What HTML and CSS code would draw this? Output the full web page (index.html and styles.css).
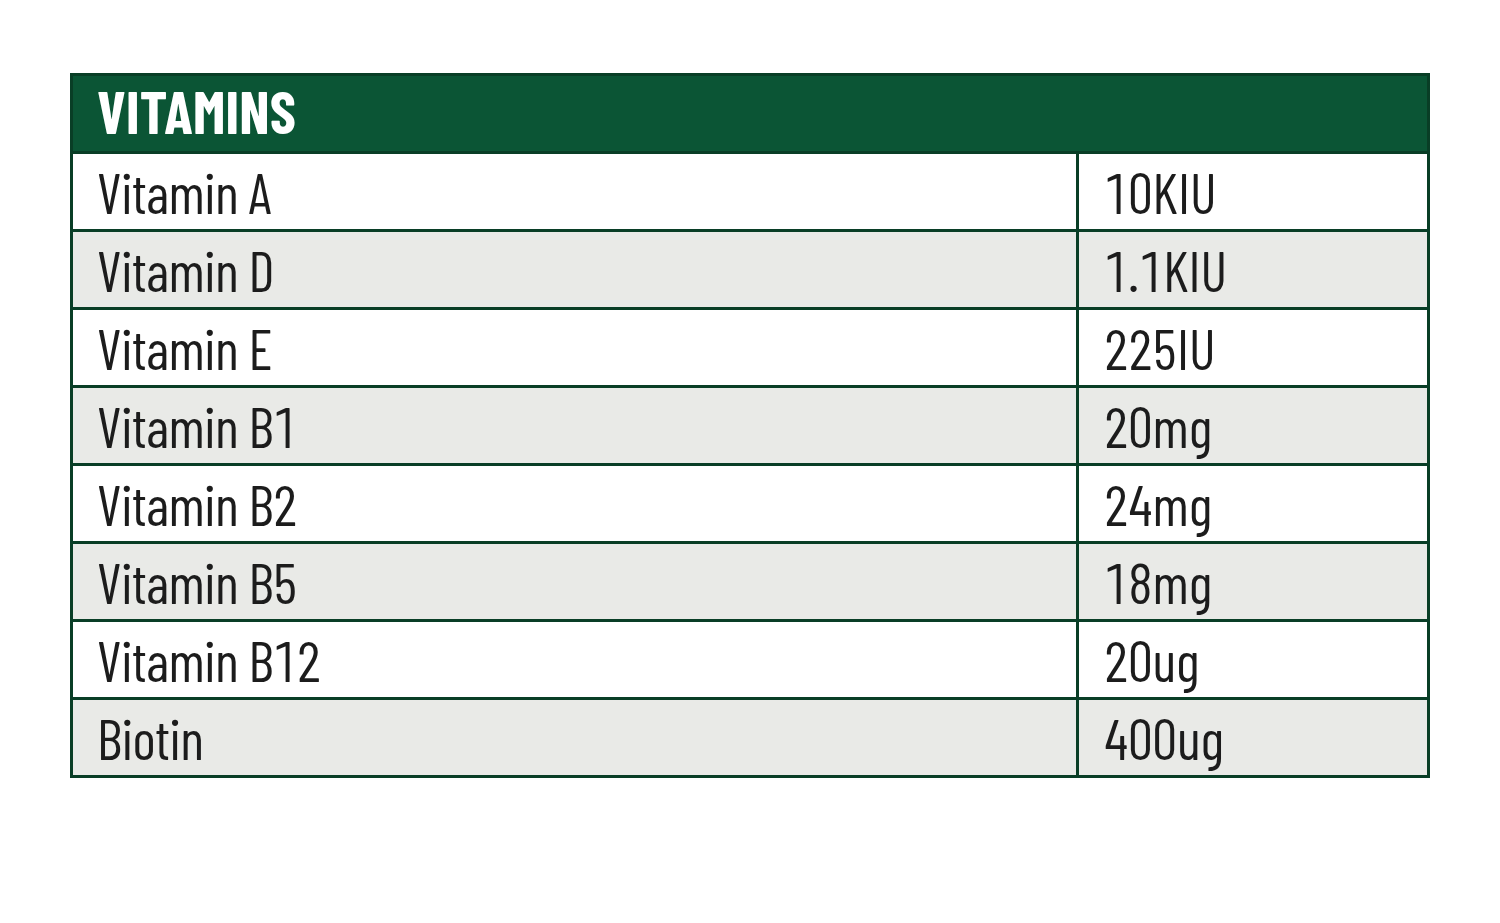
FILE: index.html
```html
<!DOCTYPE html>
<html><head><meta charset="utf-8"><link rel="stylesheet" href="styles.css"></head>
<body>
<div class="table">
  <div class="head">VITAMINS</div>
  <div class="row"><div class="name">Vitamin A</div><div class="val">10KIU</div></div>
  <div class="row alt"><div class="name">Vitamin D</div><div class="val">1.1KIU</div></div>
  <div class="row"><div class="name">Vitamin E</div><div class="val">225IU</div></div>
  <div class="row alt"><div class="name">Vitamin B1</div><div class="val">20mg</div></div>
  <div class="row"><div class="name">Vitamin B2</div><div class="val">24mg</div></div>
  <div class="row alt"><div class="name">Vitamin B5</div><div class="val">18mg</div></div>
  <div class="row"><div class="name">Vitamin B12</div><div class="val">20ug</div></div>
  <div class="row alt"><div class="name">Biotin</div><div class="val">400ug</div></div>
</div>
</body></html>
```
FILE: styles.css
```css
html,body{margin:0;padding:0;background:#fff}
body{padding:73px 0 0 70px;font-family:"Barlow Condensed","Roboto Condensed",sans-serif;color:#1c1c1c}
.table{width:1360px;border:3px solid #093e26;box-sizing:border-box}
.head{height:75px;background:#0b5535;color:#fff;font-weight:700;font-size:59px;line-height:70px;padding-left:24px;letter-spacing:0.2px}
.row{display:flex;height:78px;box-sizing:border-box;border-top:3px solid #093e26;font-size:56px;background:#fff;font-variant-numeric:tabular-nums}
.row.alt{background:#e9eae7}
.name{flex:0 0 1003px;padding-left:24px;box-sizing:border-box;display:flex;align-items:center;letter-spacing:-0.7px}
.val{flex:1;border-left:3px solid #093e26;padding-left:25px;display:flex;align-items:center}
```
